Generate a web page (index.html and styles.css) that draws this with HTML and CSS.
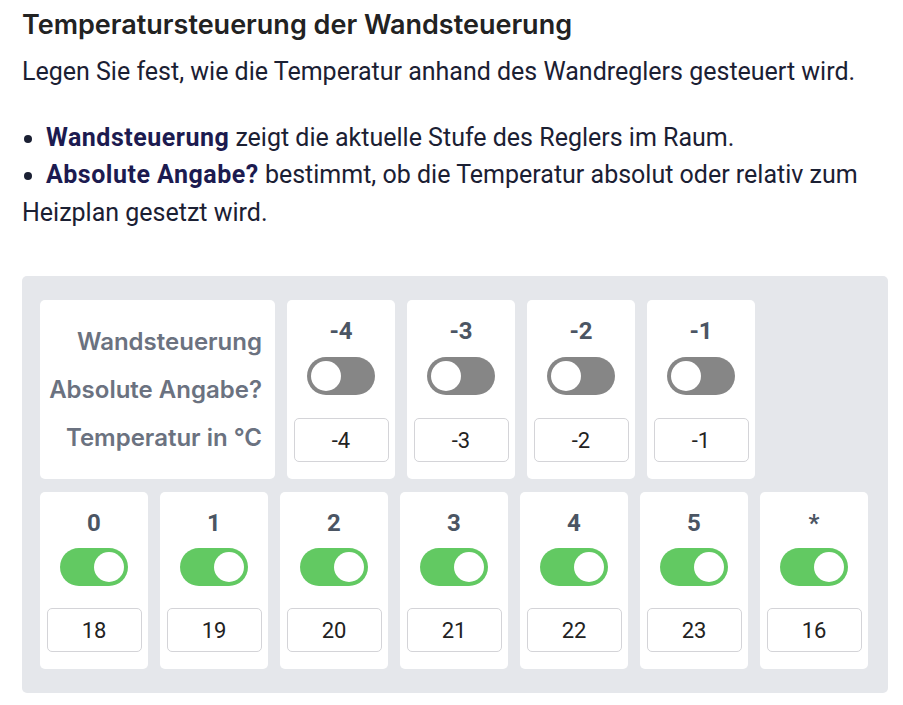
FILE: index.html
```html
<!DOCTYPE html>
<html lang="de">
<head>
  <meta charset="UTF-8" />
  <meta name="viewport" content="width=device-width, initial-scale=1" />
  <title>Wandsteuerung</title>
  <link rel="stylesheet" href="styles.css">
</head>
<body>

  <div class="page">
    <h2>Temperatursteuerung der Wandsteuerung</h2>
    <p class="intro">Legen Sie fest, wie die Temperatur anhand des Wandreglers gesteuert wird.</p>

    <ul class="hints">
      <li><strong>Wandsteuerung</strong> zeigt die aktuelle Stufe des Reglers im Raum.</li>
      <li><strong>Absolute Angabe?</strong> bestimmt, ob die Temperatur absolut oder relativ zum Heizplan gesetzt wird.</li>
    </ul>

    <div class="panel">
      <div class="card labels">
        <div>Wandsteuerung</div>
        <div>Absolute Angabe?</div>
        <div>Temperatur in °C</div>
      </div>

      <div class="card">
        <div class="level">-4</div>
        <label class="switch"><input type="checkbox"><span></span></label>
        <input class="temp" type="text" value="-4">
      </div>
      <div class="card">
        <div class="level">-3</div>
        <label class="switch"><input type="checkbox"><span></span></label>
        <input class="temp" type="text" value="-3">
      </div>
      <div class="card">
        <div class="level">-2</div>
        <label class="switch"><input type="checkbox"><span></span></label>
        <input class="temp" type="text" value="-2">
      </div>
      <div class="card">
        <div class="level">-1</div>
        <label class="switch"><input type="checkbox"><span></span></label>
        <input class="temp" type="text" value="-1">
      </div>

      <div class="card">
        <div class="level">0</div>
        <label class="switch"><input type="checkbox" checked><span></span></label>
        <input class="temp" type="text" value="18">
      </div>
      <div class="card">
        <div class="level">1</div>
        <label class="switch"><input type="checkbox" checked><span></span></label>
        <input class="temp" type="text" value="19">
      </div>
      <div class="card">
        <div class="level">2</div>
        <label class="switch"><input type="checkbox" checked><span></span></label>
        <input class="temp" type="text" value="20">
      </div>
      <div class="card">
        <div class="level">3</div>
        <label class="switch"><input type="checkbox" checked><span></span></label>
        <input class="temp" type="text" value="21">
      </div>
      <div class="card">
        <div class="level">4</div>
        <label class="switch"><input type="checkbox" checked><span></span></label>
        <input class="temp" type="text" value="22">
      </div>
      <div class="card">
        <div class="level">5</div>
        <label class="switch"><input type="checkbox" checked><span></span></label>
        <input class="temp" type="text" value="23">
      </div>
      <div class="card">
        <div class="level">*</div>
        <label class="switch"><input type="checkbox" checked><span></span></label>
        <input class="temp" type="text" value="16">
      </div>
    </div>
  </div>

</body>
</html>
```

FILE: styles.css
```css
* {
  box-sizing: border-box;
}

body {
  font-family: Roboto, 'Liberation Sans', sans-serif;
  background: #fff;
  color: #1b2033;
  margin: 0;
  padding: 0;
}

.page {
  width: 866px;
  margin-left: 22px;
  padding-top: 6px;
}

h2 {
  margin: 0;
  font-family: Inter, Roboto, sans-serif;
  font-size: 27px;
  line-height: 37px;
  font-weight: 600;
  color: #222;
}

.intro {
  margin: 10px 0 0;
  font-size: 25px;
  line-height: 37.5px;
}

.hints {
  list-style: none;
  margin: 28px 0 0;
  padding: 0;
  font-size: 25px;
  line-height: 37.5px;
}

/* round dot in front of each hint */
.hints li::before {
  content: "";
  display: inline-block;
  width: 8px;
  height: 8px;
  margin: 0 14px 0 2px;
  border-radius: 50%;
  background: #1b2033;
  vertical-align: middle;
}

.hints strong {
  color: #1c1b50;
  font-weight: 700;
  letter-spacing: 0.5px;
}

/* grey tray holding the level cards */
.panel {
  margin-top: 45px;
  background: #e5e7eb;
  border-radius: 5px;
  padding: 24px 20px 24px 18px;
  display: flex;
  flex-wrap: wrap;
  gap: 13px 12px;
}

.card {
  width: 108px;
  background: #fff;
  border-radius: 5px;
  padding: 18px 6px 17px;
  display: flex;
  flex-direction: column;
  align-items: center;
  justify-content: space-between;
}

.card.labels {
  width: 235px;
  padding: 18px 13px 17px 0;
  align-items: flex-end;
  justify-content: flex-start;
  font-family: Inter, Roboto, sans-serif;
  font-size: 24px;
  font-weight: 600;
  line-height: 48px;
  white-space: nowrap;
  color: #6b7280;
}

.level {
  font-size: 24px;
  line-height: 22px;
  font-weight: 700;
  color: #4b5563;
  margin-top: 2px;
}

.switch {
  position: relative;
  display: block;
  width: 68px;
  height: 38px;
  margin-top: 14px;
}

.switch input {
  display: none;
}

.switch span {
  position: absolute;
  inset: 0;
  background: #868686;
  border-radius: 19px;
}

.switch span::after {
  content: "";
  position: absolute;
  top: 4px;
  left: 4px;
  width: 30px;
  height: 30px;
  border-radius: 50%;
  background: #fff;
}

.switch input:checked + span {
  background: #62c962;
}

.switch input:checked + span::after {
  left: 34px;
}

.temp {
  width: 95px;
  height: 44px;
  margin-top: 22px;
  border: 1px solid #d4d4d8;
  border-radius: 5px;
  background: #fff;
  text-align: center;
  font-family: Roboto, 'Liberation Sans', sans-serif;
  font-size: 22px;
  color: #222;
  padding: 0;
}
```
